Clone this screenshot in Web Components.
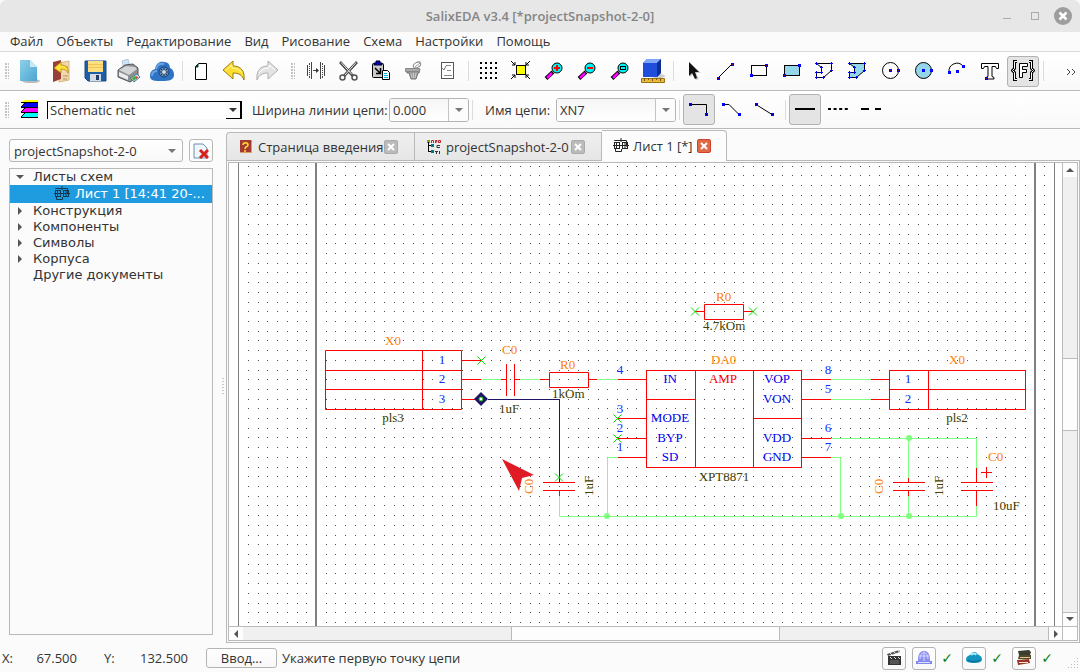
<!DOCTYPE html>
<html lang="ru">
<head>
<meta charset="utf-8">
<title>SalixEDA v3.4</title>
<style>
html, body { height: 100%; margin: 0; }
body { background: #fbfbfb; color: #333; font: 13px/16px "Open Sans", "Noto Sans", sans-serif; overflow: hidden; }
</style>
</head>
<body>
<eda-window></eda-window>
<script>
/* ---------- icons ---------- */
const node = (x, y) => `<rect x="${x - 1}" y="${y - 1}" width="3" height="3" fill="#00f"/><rect x="${x}" y="${y}" width="1" height="1" fill="#a00"/>`;
const pin = (x, y) => `<rect x="${x - 1}" y="${y - 1}" width="3" height="3" fill="#00f"/><rect x="${x}" y="${y}" width="1" height="1" fill="#006"/>`;
const K = 'stroke="#000" fill="none"';
const lens = inner => `<path d="M4 19.500L11 13" stroke="#000" stroke-width="4"/><path d="M5 19L10 14" stroke="#f0f" stroke-width="2.500"/><circle cx="15" cy="9" r="5" fill="#00f4f4" stroke="#000"/>${inner}`;
const sheet = c => `<g fill="none" stroke="${c}"><path d="M1.500 3v-.500h12v6"/><rect x="1.500" y="4.500" width="5" height="6"/><rect x="9.500" y="4.500" width="5" height="6"/><path d="M0 7.500h16M8 0v4M3.500 5v5M12 5v5M2.500 11v2.500h6v-2.500" /></g>`;
const ICONS = {
  newdoc: `<defs><linearGradient id="g" x2="1" y2="1"><stop stop-color="#8fd0ea"/><stop offset="1" stop-color="#4ba5cf"/></linearGradient></defs><ellipse cx="13" cy="22" rx="9" ry="2" fill="#bbb"/><path d="M2 1h10l7 7v14H2z" fill="url(#g)"/><path d="M12 1v7h7z" fill="#c9e9f5"/>`,
  open: `<path d="M8 4l10-2v19l-10 2z" fill="#f0d9ae" stroke="#d8b880"/><path d="M12 8h5M12 17h5M12 20h4" stroke="#b98b55"/><path d="M2 3l8-2v19l-8 3z" fill="#9a3f37"/><path d="M3 9l7-6v3c5 0 8 3 7 8-1-3-4-4-7-4v4z" fill="#ffe13a" stroke="#a9790e" stroke-width=".7"/>`,
  save: `<path d="M1 2h21v20H4l-3-3z" fill="#1f5fa8" stroke="#174a86"/><rect x="4" y="2" width="15" height="11" fill="#ffdf80"/><path d="M4 5.500h15M4 8.500h15" stroke="#f2c455"/><rect x="6" y="15" width="11" height="7" fill="#d6dbe2"/><rect x="12" y="16" width="3" height="5" fill="#1f3f68"/>`,
  print: `<path d="M5 2l6-2 2 8-6 3z" fill="#cfe4f7" stroke="#9bb6cf" stroke-width=".7"/><path d="M1 11l7-5 8-1 5 4v9l-8 5-12-5z" fill="#8d8f92" stroke="#55585c"/><path d="M2 11l7-4 9 1 2 2-8 6z" fill="#d2d4d6"/><path d="M2 13l9 4v4l-9-4z" fill="#ececec"/><path d="M13 19l7-4 3 3-6 5z" fill="#cfe6ff" stroke="#578"/><path d="M14 19l4-2 2 2-3 3z" fill="#4bb04b"/><path d="M18 18l2-1 1 2-2 1z" fill="#d6452d"/>`,
  cloud: `<path d="M0 17c0-4 2-6 5-7 1-6 5-8 9-7 5 0 6 4 6 6 3 1 4 4 4 7 0 5-5 6-12 6S0 22 0 17z" fill="#2f74c4"/><path d="M6 10c1-5 5-6 8-5M2 17c0-3 2-5 5-5" stroke="#6ea4e3" fill="none" stroke-width="2"/><circle cx="14" cy="13" r="5" fill="#6a8fb8" stroke="#153f78"/><path d="M14 9v8M10 13h8M11 10l6 6M17 10l-6 6" stroke="#17335c"/><circle cx="14" cy="13" r="2" fill="#cfd8e2"/>`,
  page: `<path d="M8.500 4.500h8v16h-11v-13z" fill="#fff" stroke="#000"/><path d="M8 5v3H6z" fill="#088" stroke="#033"/>`,
  undo: `<path d="M0 11l10-9v5c8 0 12 5 11 14-2-5-5-7-11-7v6z" fill="#ffdf2e" stroke="#9c7c10"/><path d="M3 11l6-5v3c5 0 8 2 10 5" fill="none" stroke="#fff6a8"/>`,
  redo: `<path d="M22 11L12 2v5C4 7 0 12 1 21c2-5 5-7 11-7v6z" fill="#e3e3e3" stroke="#b0b0b0"/><path d="M19 11l-6-5v3c-5 0-8 2-10 5" fill="none" stroke="#fff"/>`,
  mirror: `<g fill="none" stroke="#444"><path d="M7.500 3v17M3.500 6v11M5.500 4v2M5.500 17v2M16.500 3v17M20.500 6v11M18.500 4v2M18.500 17v2"/><path d="M5.500 7v9M18.500 7v9" stroke-dasharray="1 1"/><path d="M9 11.500h4"/></g><path d="M12 9l3 2.500-3 2.500z" fill="#333"/>`,
  cut: `<path d="M3 3l13 14M20 3L7 17" stroke="#444" stroke-width="2.600"/><path d="M4 3.500l11 12M19 3.500L8 16" stroke="#eee"/><circle cx="5.500" cy="18.500" r="2.500" fill="none" stroke="#555" stroke-width="1.500"/><circle cx="17.500" cy="18.500" r="2.500" fill="none" stroke="#555" stroke-width="1.500"/>`,
  paste: `<rect x="2.500" y="4.500" width="11" height="14" rx="1" fill="#ccc" stroke="#000"/><path d="M4 4h2V2h4v2h2v2H4z" fill="#00b" stroke="#002"/><path d="M5 9l5 5M10.500 9v5.500H6" stroke="#000" stroke-width="1.500" fill="none"/><path d="M12.500 11.500h5l2 2v7h-7z" fill="#fff" stroke="#000"/><path d="M14 14.500h3M14 16.500h4M14 18.500h4" stroke="#0bd"/>`,
  trash: `<path d="M3 10h14l-1 4h-1l-2 6H8l-2-6H4z" fill="#999" stroke="#777"/><path d="M2.500 9.500h14v3h-14z" fill="#aaa" stroke="#888"/><path d="M8 14l1 5M10.500 14v5M13 14l-1 5" stroke="#ccc"/><ellipse cx="14" cy="6" rx="4" ry="2.500" transform="rotate(-30 14 6)" fill="none" stroke="#888"/><path d="M12 8l5-4" stroke="#999"/>`,
  props: `<rect x="5.500" y="3.500" width="12" height="16" fill="#fff" stroke="#555"/><path d="M10 6.500h5M11 11.500h4M8 16.500h8" stroke="#888"/><path d="M6 9l2 2 2-4" stroke="#777" fill="none"/>`,
  grid: [3, 8, 13, 18].map(y => [4, 9, 14, 19].map(x => `<rect x="${x}" y="${y}" width="2" height="2"/>`).join('')).join(''),
  fit: `<rect x="7.500" y="6.500" width="9" height="9" fill="#ff0" stroke="#000"/><path d="M2 2l4 4M6 3v3H3M21 2l-4 4M17 3v3h3M2 20l4-4M6 19v-3H3M21 20l-4-4M17 19v-3h3" ${K}/>`,
  zin: lens('<path d="M12 9h6M15 6v6" stroke="#f00" stroke-width="2"/>'),
  zout: lens('<path d="M12 9h6" stroke="#f00" stroke-width="2"/>'),
  zfit: lens('<rect x="12.500" y="7.500" width="5" height="3" fill="none" stroke="#000"/>'),
  cube: `<ellipse cx="17" cy="17" rx="7" ry="2" fill="#ccc"/><path d="M2 4l4-4h14v14l-4 4H2z" fill="#2356c8"/><path d="M2 4h14v14H2z" fill="#1f4ddc"/><path d="M2 4l4-4h14l-4 4z" fill="#7fa9f6"/><path d="M16 4l4-4v14l-4 4z" fill="#0b2f93"/><path d="M.500 19.500h23v4h-23z" fill="#e8b93c" stroke="#9b7415"/><path d="M3.500 19v3M7.500 19v2M11.500 19v3M15.500 19v2M19.500 19v3" stroke="#7b5a0a"/>`,
  arrow: `<path d="M9 4v14l3-3 3 6 3-1-3-6h5z" fill="#999" opacity=".5"/><path d="M8 3v14l3-3 3 6 2-1-2-6h4z" fill="#111"/>`,
  line: `<path d="M4 19L18 5" ${K}/>${node(4, 19)}${node(18, 5)}`,
  rect: `<rect x="4.500" y="6.500" width="15" height="10" ${K}/>${node(4, 16)}${node(19, 6)}`,
  frect: `<rect x="4.500" y="6.500" width="15" height="10" fill="#95d7ea" stroke="#000"/>${node(4, 16)}${node(19, 6)}`,
  poly: `<path d="M3.500 4.500h15v7l-8 7h-7v-5h5v-5z" ${K}/><g fill="#00f">${[[3,4],[18,4],[18,11],[10,18],[3,18],[3,13],[8,13],[8,8]].map(p => `<path d="M${p[0]-1} ${p[1]}h3v1h-3zM${p[0]} ${p[1]-1}h1v3h-1z"/>`).join('')}</g>`,
  circ: `<circle cx="11.500" cy="11.500" r="8" ${K}/>${node(11, 11)}${node(19, 11)}`,
  fcirc: `<circle cx="11.500" cy="11.500" r="8" fill="#95d7ea" stroke="#000"/>${node(11, 11)}${node(19, 11)}`,
  arc: `<path d="M4 13a8 8 0 0 1 14-6" ${K}/>${node(4, 13)}${node(12, 12)}${node(18, 7)}`,
  text: `<path d="M3.500 4.500h17v5h-2l-1-2h-3.500v10l2 1v1.500h-8v-1.500l2-1v-10H6.500l-1 2h-2z" fill="#fff" stroke="#000"/>${node(8, 19)}`,
  field: `<path d="M6 2.500h-2.500v7l-2 2 2 2v7H6M18 2.500h2.500v7l2 2-2 2v7H18" fill="none" stroke="#000" stroke-width="3"/><path d="M6 2.500h-2.500v7l-2 2 2 2v7H6M18 2.500h2.500v7l2 2-2 2v7H18" fill="none" stroke="#fff"/><path d="M8.500 4.500h8v3h-5v3h4v3h-4v5h-3z" fill="#fff" stroke="#000"/>`,
  layers: `<path d="M6 2h14v2H4z" fill="#ff0"/><path d="M6 5h14v4H3z" fill="#00f"/><path d="M6 10h14v4H3z" fill="#f0f"/><path d="M6 15h14v4H3z" fill="#0ff"/><path d="M3 4.500h17M3 9.500h17M3 14.500h17M3 19.500h17M7 5l-4 4M7 10l-4 4M7 15l-4 4" stroke="#000" fill="none"/>`,
  ortho: `<path d="M3 6.500h16.500V16" ${K}/>${pin(3, 6)}${pin(19, 16)}`,
  bevel: `<path d="M3 6.500h6l10 10" ${K}/>${pin(3, 6)}${pin(19, 16)}`,
  direct: `<path d="M3 6.500l16 10" ${K}/>${pin(3, 6)}${pin(19, 16)}`,
  solid: `<path d="M2 11h20" stroke="#000" stroke-width="2"/>`,
  dots: `<path d="M2 11h20" stroke="#000" stroke-width="2" stroke-dasharray="3 2.600"/>`,
  dash: `<path d="M2 11h8M16 11h6" stroke="#000" stroke-width="2"/>`,
  closesheet: `<path d="M1 1h9l4 4v10H1z" fill="#eef5fb" stroke="#7090b0"/><path d="M7 7l8 8M15 7l-8 8" stroke="#d5201e" stroke-width="3"/>`,
  help: `<path d="M2 1h11l1 2v11H3l-1-1z" fill="#a33a32"/><path d="M13 3h1v11H3v-1h10z" fill="#d9a35f"/><path d="M5 6c0-3 5-3 5 0 0 2-3 1-3 4M7 11v2" stroke="#fd3" stroke-width="1.500" fill="none"/>`,
  tree: `<path d="M1 1h3v3H1z" fill="#990"/><path d="M5.500 4V1.500h2V4M9.500 4V1.500h1.500v1.500H9M12.500 1.500h2v2h-2z" stroke="#b22" fill="none"/><path d="M2.500 3v10M2 6.500h4M2 12.500h4" ${K}/><rect x="5" y="5" width="3" height="3" fill="#077"/><rect x="5" y="11" width="3" height="3" fill="#077"/><path d="M14 6.500h-3v2h3M9 12.500h3M10.500 12v3M13.500 12v3" stroke="#333" fill="none"/>`,
  sheet: sheet('#222'), sheetsel: sheet('#123a55'),
  clap: `<path d="M3 7h13v9H3z" fill="#333"/><path d="M2 5l12-4 1 2-12 4z" fill="#555"/><path d="M5 4l2 2M9 3l2 2M13 1l1 2M5 8l2 2M9 8l2 2M13 8l2 2" stroke="#ddd"/><path d="M5 12h9M5 14h9" stroke="#777"/>`,
  dome: `<path d="M3 10c0-11 12-11 12 0v2H3z" fill="#8b8ff0"/><path d="M5 10c0-4 2-6 4-7M13 10c0-4-2-6-4-7M9 3v9M4 7h10" stroke="#d5d8ff" fill="none"/><path d="M1 12h16v3H1z" fill="#8086ea"/><path d="M3 13.500h12" stroke="#dfe1ff"/>`,
  blue: `<path d="M1 11c0-4 3-4 5-6 2-3 6-2 6 0 3 1 5 3 5 5 0 3-3 4-8 4s-8-1-8-3z" fill="#1295c0"/><path d="M6 6c2-2 4-2 5 0" stroke="#aaf2ff" stroke-width="2" fill="none"/><path d="M3 11c3 2 9 2 12 0" stroke="#0a5f86" fill="none"/>`,
  books: `<path d="M3 2l11-1 2 2-1 3H4z" fill="#3a3c30"/><path d="M4 6h12v4H3z" fill="#55492c"/><path d="M5 8.500h10" stroke="#dcc88d"/><path d="M2 11l12-1 1 4-12 2z" fill="#9a3427"/><path d="M4 13.500h9" stroke="#eed"/>`
};
const sized = { closesheet: 16, help: 16, tree: 16, sheet: 16, sheetsel: 16, clap: 18, dome: 18, blue: 18, books: 18 };

function define(name, html, setup) {
  const template = document.createElement('template');
  template.innerHTML = html;
  customElements.define(name, class extends HTMLElement {
    constructor() {
      super();
      this.attachShadow({ mode: 'open' }).append(template.content.cloneNode(true));
    }
    connectedCallback() { if (setup) setup(this, this.shadowRoot); }
  });
}

define('eda-icon', `<style>:host{display:block;flex:none}svg{display:block}</style><svg aria-hidden="true"></svg>`, (el, root) => {
  const n = el.getAttribute('name'), s = sized[n] || 24;
  if (!n) return;
  const svg = root.querySelector('svg');
  svg.setAttribute('width', s); svg.setAttribute('height', s); svg.setAttribute('viewBox', `0 0 ${s} ${s}`);
  svg.innerHTML = n === 'fpoly' ? ICONS.poly.replace('fill="none"', 'fill="#95d7ea"') : ICONS[n];
});

define('tool-button', `<style>
:host{display:block;flex:none;width:33px}
button{box-sizing:border-box;width:32px;height:31px;padding:0;border:1px solid transparent;border-radius:3px;background:none;display:flex;align-items:center;justify-content:center}
:host([pressed]) button{background:#e4e4e4;border-color:#b2b2b2}
</style><button type="button"></button>`, (el, root) => {
  const b = root.querySelector('button');
  b.setAttribute('aria-label', el.getAttribute('label'));
  b.innerHTML = `<eda-icon name="${el.getAttribute('icon')}"></eda-icon>`;
});

define('tool-sep', `<style>:host{display:block;flex:none;width:1px;height:20px;margin:0 3px;background:#dcdcdc}</style>`);
define('tool-grip', `<style>:host{display:block;flex:none;width:4px;height:16px;margin:0 5px;background:radial-gradient(circle at 1px 1px,#c4c4c4 1px,transparent 1px) 0 0/3px 3px}:host(:not(:first-child)){margin-left:6px}</style>`);

define('title-bar', `<style>
:host{display:grid;grid-template-columns:1fr auto 1fr;align-items:center;height:32px;background:#e7e7e7;border-radius:6px 6px 0 0;color:#858585}
h1{grid-column:2;margin:0;font:600 13px/16px "Open Sans","Noto Sans",sans-serif}
div{display:flex;justify-content:flex-end;gap:10px;padding-right:8px}
button{width:18px;height:18px;padding:0;border:0;background:none;display:block}
svg{display:block}
</style><h1><slot></slot></h1><div>
<button aria-label="Свернуть"><svg width="18" height="18"><path d="M5 11.500h8" stroke="#aaa"/></svg></button>
<button aria-label="Развернуть"><svg width="18" height="18"><rect x="5.500" y="5.500" width="7" height="7" fill="none" stroke="#aaa"/></svg></button>
<button aria-label="Закрыть"><svg width="18" height="18"><circle cx="9" cy="9" r="9" fill="#9d9d9d"/><path d="M5.500 5.500l7 7M12.500 5.500l-7 7" stroke="#fff" stroke-width="2.500"/></svg></button></div>`);

define('menu-bar', `<style>
:host{display:flex;gap:13px;height:19px;padding:0 10px;border-bottom:1px solid #dadada;background:#fbfbfb}
::slotted(button){flex:none;height:18px;padding:0;border:0;background:none;font:inherit;color:inherit}
</style><slot></slot>`);

define('tool-bar', `<style>
:host{display:flex;align-items:center;height:38px;border-bottom:1px solid #b9b9b9;background:linear-gradient(#fff,#f9f9f9)}
:host([slim]){height:37px}
</style><slot></slot>`);

define('edit-combo', `<style>
:host{display:flex;align-items:center;flex:none}
label{white-space:nowrap}
div{box-sizing:border-box;display:flex;height:24px;border:1px solid #b4b4b4;border-radius:3px;background:#fff;overflow:hidden}
input{flex:1;min-width:0;border:0;padding:0 3px;background:linear-gradient(#f6f6f6,#fff);font:inherit;color:inherit;outline:0}
button{width:20px;padding:0;border:0;border-left:1px solid #c4c4c4;background:#fcfcfc;display:grid;place-items:center}
</style><label for="f"></label><div><input id="f"><button type="button" aria-label="Список"><svg width="8" height="4"><path d="M0 0h8L4 4z" fill="#777"/></svg></button></div>`, (el, root) => {
  root.querySelector('label').textContent = el.getAttribute('label');
  root.querySelector('label').style.width = el.getAttribute('labelwidth') + 'px';
  root.querySelector('div').style.width = el.getAttribute('width') + 'px';
  root.querySelector('input').value = el.getAttribute('value');
});

define('layer-select', `<style>
:host{display:block;flex:none;width:195px;margin:0 10px 0 5px}
div{position:relative}
select{box-sizing:border-box;display:block;width:100%;height:18px;appearance:none;border:0;border-top:1px solid #000;border-left:1px solid #000;border-right:1px solid #000;border-radius:0;background:#fff;padding:0 0 0 2px;font:inherit;color:inherit}
span{position:absolute;right:0;top:1px;box-sizing:border-box;width:16px;height:17px;border-right:2px solid #000;border-bottom:1px solid #000;display:grid;place-items:center;background:#fcfcfc;pointer-events:none}
</style><div><select aria-label="Слой"><option>Schematic net</option></select><span><svg width="8" height="4"><path d="M0 0h8L4 4z" fill="#333"/></svg></span></div>`);

define('side-panel', `<style>
:host{display:flex;flex-direction:column;gap:6px;flex:none;box-sizing:border-box;width:213px;padding:10px 0 9px 9px}
.top{display:flex;gap:6px}
.sel{position:relative;flex:1}
select{box-sizing:border-box;width:100%;height:23px;display:block;appearance:none;border:1px solid #b8b8b8;border-radius:3px;background:linear-gradient(#fff,#f8f8f8);padding:0 4px;font:inherit;color:inherit}
.sel svg{position:absolute;right:7px;top:10px;pointer-events:none}
button{box-sizing:border-box;width:24px;height:23px;padding:0;border:1px solid #b8b8b8;border-radius:3px;background:#fdfdfd;display:grid;place-items:center}
</style><div class="top"><div class="sel"><select aria-label="Проект"><option>projectSnapshot-2-0</option></select><svg width="8" height="4"><path d="M0 0h8L4 4z" fill="#777"/></svg></div><button aria-label="Закрыть проект"><eda-icon name="closesheet"></eda-icon></button></div><slot></slot>`);

define('doc-tree', `<style>
:host{display:block;flex:1;border:1px solid #b9b9b9;font:13px/16px "DejaVu Sans",sans-serif}
ul{margin:0;padding:0;list-style:none}
li{display:flex;align-items:center;height:16px}
li svg{flex:none;width:23px}
.on{height:18px;background:#1e9cdf;color:#fff}
.on eda-icon{margin:0 5px 0 44px}
.on span{overflow:hidden;white-space:nowrap}
</style><ul role="tree">
<li role="treeitem"><svg height="8"><path d="M6 2h8l-4 4z" fill="#555"/></svg>Листы схем</li>
<li role="treeitem" class="on"><eda-icon name="sheetsel"></eda-icon><span>Лист 1 [14:41 20-...</span></li>
<li role="treeitem"><svg height="8"><path d="M8 0v8l4-4z" fill="#555"/></svg>Конструкция</li>
<li role="treeitem"><svg height="8"><path d="M8 0v8l4-4z" fill="#555"/></svg>Компоненты</li>
<li role="treeitem"><svg height="8"><path d="M8 0v8l4-4z" fill="#555"/></svg>Символы</li>
<li role="treeitem"><svg height="8"><path d="M8 0v8l4-4z" fill="#555"/></svg>Корпуса</li>
<li role="treeitem"><svg height="8"></svg>Другие документы</li></ul>`);

define('doc-tab', `<style>
:host{display:flex;align-items:center;flex:none;box-sizing:border-box;height:28px;padding:1px 16px 0 11px;border:1px solid #b9b9b9;border-bottom:0;border-left-width:0;background:linear-gradient(#efefef,#e6e6e6)}
:host(:first-child){border-left-width:1px;border-radius:4px 0 0 0}
:host([active]){height:31px;margin-bottom:-1px;padding:0 15px 1px 11px;background:#fcfcfc;border-left:0;border-radius:0 4px 0 0;z-index:1}
slot{display:block;flex:1;white-space:nowrap;padding-left:4px}
button{flex:none;width:14px;height:14px;padding:0;border:1px solid #aaa;border-radius:2px;background:#bbb;display:grid;place-items:center}
:host([active]) button{background:#e06a48;border-color:#cf4030}
</style><eda-icon></eda-icon><slot></slot><button aria-label="Закрыть вкладку"><svg width="8" height="8"><path d="M1 1l6 6M7 1l-6 6" stroke="#fff" stroke-width="2"/></svg></button>`, (el, root) => {
  const i = document.createElement('eda-icon');
  i.setAttribute('name', el.getAttribute('icon'));
  root.querySelector('eda-icon').replaceWith(i);
  el.style.width = el.getAttribute('width') + 'px';
});

define('scroll-bar', `<style>
:host{display:flex;background:#f0f0f0}
:host([vertical]){flex-direction:column;width:14px;border-left:1px solid #bbb}
:host(:not([vertical])){height:13px;border-top:1px solid #bbb}
button{flex:none;width:14px;height:14px;padding:0;border:0 solid #bbb;background:#fdfdfd;display:grid;place-items:center}
:host(:not([vertical])) button{height:13px}
i{flex:269;background:#f0f0f0}
b{flex:269;background:#fdfdfd;border:0 solid #bbb}
:host([vertical]) i{flex:181}:host([vertical]) b{flex:72;border-width:1px 0}
:host(:not([vertical])) b{border-width:0 1px}
:host([vertical]) button:first-child{border-bottom-width:1px}:host([vertical]) button:last-child{border-top-width:1px}
:host(:not([vertical])) button:first-child{border-right-width:1px}:host(:not([vertical])) button:last-child{border-left-width:1px}
</style><button aria-label="Назад"><svg width="8" height="8"><path/></svg></button><i></i><b></b><i></i><button aria-label="Вперёд"><svg width="8" height="8"><path/></svg></button>`, (el, root) => {
  const d = el.hasAttribute('vertical') ? ['M0 6h8L4 2z', 'M0 2h8L4 6z'] : ['M6 0v8L2 4z', 'M2 0v8l4-4z'];
  root.querySelectorAll('path').forEach((p, i) => { p.setAttribute('d', d[i]); p.setAttribute('fill', '#555'); });
});

/* ---------- schematic sheet ---------- */
const R = '#f00', G = '#80ff80', O = '#ff8000', B = '#0000f0', N = '#1030ff', D = '#404000';
const path = (d, c, w = 1) => `<path d="${d}" stroke="${c}" stroke-width="${w}" fill="none"/>`;
const txt = (s, x, y, c) => `<text x="${x}" y="${y}" fill="${c}">${s}</text>`;
const mid = (s, x, y, c) => `<text x="${x}" y="${y}" fill="${c}" text-anchor="middle">${s}</text>`;
const up = (s, x, y, c) => `<text transform="translate(${x} ${y}) rotate(-90)" fill="${c}">${s}</text>`;
const cross = (x, y, c = '#00e000') => `<path d="M${x - 4} ${y - 4}l8 8M${x + 4} ${y - 4}l-8 8" stroke="${c}" fill="none"/>`;
const dot = (x, y) => `<circle cx="${x}" cy="${y}" r="3" fill="${G}"/>`;

define('schematic-view', `<style>
:host{display:block;min-width:0;min-height:0;overflow:hidden;background:#fff}
svg{display:block;width:100%;height:100%}
text{font:13px "Liberation Serif",serif}
</style><svg role="img" aria-label="Схема"></svg>`, (el, root) => {
  const step = 9.71;
  let dots = '';
  for (let j = 0; j < 48; j++) for (let i = 0; i < 83; i++)
    dots += `M${Math.round(248 + i * step)} ${Math.round(165.6 + j * step)}h1v1h-1z`;
  root.querySelector('svg').innerHTML = `<g transform="translate(-229 -163)">
  <path d="${dots}" fill="#505050" shape-rendering="crispEdges"/>
  ${path('M238.5 163V700M1054.5 163V700', '#808080')}${path('M316 163V700M1035 163V700', '#808080', 2)}
  ${path('M481 379.5h20M520 379.5h20M597 379.5h21M618 457.5h-10.5v59M559.5 495v21.5h417V505M831 457.5h9.5v59M831 379.5h40M831 399.5h40M831 438.5h145.500v30M908.5 438.5v40M908.5 495v21', G)}
  ${path('M325.5 350.500h136v59h-136zM422.500 350v59M325 370.500h136M325 389.500h136M461 360.500h20M461 379.500h20M461 399.500h20M501 379.500h5M506.500 364v32M514.500 364v32M515 379.500h5M540 379.500h9M549.500 372.500h39v15h-39zM589 379.500h8M618 379.500h28', R)}
  ${path('M646.500 370.500h155v97h-155zM695.500 370v97M753.500 370v97M646 399.500h49M753 418.500h48M618 418.500h28M618 438.500h28M618 457.500h28M801 379.500h30M801 399.500h30M801 438.500h30M801 457.500h30', R)}
  ${path('M704.500 304.500h39v15h-39zM695 311.500h9M744 311.500h9M871 379.500h18M871 399.500h18M889.500 370.500h136v39h-136zM928.500 370v39M889 389.500h136', R)}
  ${path('M559.500 478v4M543 482.500h32M543 490.500h32M559.500 491v5M908.500 478v4M893 482.500h32M893 490.500h32M908.500 491v5M976.500 468v14M961 482.500h32M961 490.500h32M976.500 491v15M986.500 467v11M981 472.500h11', R)}
  ${path('M488 399.500h71.500V482', '#1e1664')}
  <path d="M481 392l7 7-7 7-7-7z" fill="#1e1664"/><circle cx="481" cy="399" r="2" fill="#fff" stroke="#00c000"/>
  ${cross(481.5, 360.5)}${cross(559, 477.5)}${cross(695, 311.5)}${cross(753, 311.5)}${cross(617.5, 418.5)}${cross(617.5, 438.5)}
  ${dot(607, 516)}${dot(841, 516)}${dot(909, 516)}${dot(909, 438)}
  ${mid('X0', 393, 345, O)}${mid('1', 442, 364, N)}${mid('2', 442, 383, N)}${mid('3', 442, 403, N)}${mid('pls3', 393, 422, D)}
  ${txt('C0', 502, 354, O)}${txt('1uF', 499, 413, D)}${txt('R0', 560, 369, O)}${txt('1kOm', 552, 398, D)}
  ${up('C0', 533, 494, O)}${up('1uF', 593, 496, D)}${up('C0', 883, 494, O)}${up('1uF', 943, 496, D)}
  ${txt('R0', 716, 301, O)}${txt('4.7kOm', 703, 330, D)}${txt('DA0', 711, 364, O)}${mid('AMP', 723, 383, R)}
  ${mid('IN', 670, 383, B)}${mid('MODE', 670, 422, B)}${mid('BYP', 670, 442, B)}${mid('SD', 670, 461, B)}
  ${mid('VOP', 777, 383, B)}${mid('VON', 777, 403, B)}${mid('VDD', 777, 442, B)}${mid('GND', 777, 461, B)}
  ${mid('XPT8871', 724, 481, D)}
  ${mid('4', 620, 374, N)}${mid('3', 620, 413, N)}${mid('2', 620, 432, N)}${mid('1', 620, 451, N)}
  ${mid('8', 828, 374, N)}${mid('5', 828, 393, N)}${mid('6', 828, 432, N)}${mid('7', 828, 451, N)}
  ${mid('X0', 957, 364, O)}${mid('1', 908, 383, N)}${mid('2', 908, 403, N)}${mid('pls2', 957, 422, D)}
  ${txt('C0', 988, 461, O)}${txt('10uF', 993, 510, D)}
  <path d="M502 459l32 16-12 3-3 13z" fill="#e01b24"/></g>`;
});

define('doc-area', `<style>
:host{display:flex;flex-direction:column;flex:1;min-width:0;margin-left:3px;padding:1px 0 1px}
.tabs{display:flex;align-items:flex-end}
.pane{flex:1;min-height:0;box-sizing:border-box;display:flex;border:1px solid #b9b9b9;padding:1px}
.view{flex:1;min-width:0;display:grid;grid-template:1fr 14px/1fr 15px;border:1px solid #b9b9b9;background:#fbfbfb}
.corner{border-left:1px solid #bbb;border-top:1px solid #bbb;background:#fff}
</style><div class="tabs"><slot name="tab"></slot></div><div class="pane"><div class="view"><schematic-view></schematic-view><scroll-bar vertical></scroll-bar><scroll-bar></scroll-bar><div class="corner"></div></div></div>`);

define('split-grip', `<style>:host{display:flex;align-items:center;justify-content:flex-end;flex:none;width:11px;margin-right:-1px}i{width:2px;height:18px;background:repeating-linear-gradient(#c8c8c8 0 1px,transparent 1px 3px)}</style><i></i>`);

define('status-bar', `<style>
:host{display:flex;align-items:center;height:28px;white-space:nowrap}
output{display:flex;justify-content:space-between}
.x{width:75px;margin-right:27px;padding-left:2px}.y{width:84px;margin-right:18px}
button{box-sizing:border-box;padding:0;border:1px solid #b4b4b4;border-radius:3px;background:linear-gradient(#fff,#f8f8f8);font:inherit;color:inherit;display:grid;place-items:center}
.in{width:71px;height:20px;margin-right:5px}
.st{width:24px;height:23px}
.right{margin-left:auto;display:flex;align-items:center}
.gap{margin-right:6px}
.ok{width:22px;margin-right:4px;text-align:center;color:#108010;font:14px/16px "DejaVu Sans",sans-serif}
.grip{display:block;margin:12px 0 0 6px}
</style><output class="x"><span>X:</span><span>67.500</span></output><output class="y"><span>Y:</span><span>132.500</span></output>
<button class="in">Ввод...</button><span>Укажите первую точку цепи</span>
<div class="right"><button class="st gap" aria-label="Запись"><eda-icon name="clap"></eda-icon></button>
<button class="st" aria-label="Сервер"><eda-icon name="dome"></eda-icon></button><span class="ok">✓</span>
<button class="st" aria-label="Облако"><eda-icon name="blue"></eda-icon></button><span class="ok">✓</span>
<button class="st" aria-label="Библиотека"><eda-icon name="books"></eda-icon></button><span class="ok">✓</span>
<svg class="grip" width="12" height="12" fill="#bbb"><path d="M9 0h1v1h-1zM6 3h1v1h-1zM9 3h1v1h-1zM3 6h1v1h-1zM6 6h1v1h-1zM9 6h1v1h-1zM0 9h1v1h-1zM3 9h1v1h-1zM6 9h1v1h-1zM9 9h1v1h-1z"/></svg></div>`);

const tb = list => list.split(' ').map(n => n === '|' ? '<tool-sep></tool-sep>' : n === ':' ? '<tool-grip></tool-grip>' :
  n.startsWith('+') ? `<tool-button pressed icon="${n.slice(1)}" label="${n.slice(1)}"></tool-button>` : `<tool-button icon="${n}" label="${n}"></tool-button>`).join('');

define('eda-window', `<style>
:host{display:flex;flex-direction:column;height:100vh}
main{flex:1;min-height:0;display:flex}
.more{margin:0 4px 0 auto;padding:0;border:0;background:none;font:inherit;color:#444}
.layers{width:28px}
.net{margin-left:9px}
</style>
<title-bar>SalixEDA v3.4 [*projectSnapshot-2-0]</title-bar>
<menu-bar><button>Файл</button><button>Объекты</button><button>Редактирование</button><button>Вид</button><button>Рисование</button><button>Схема</button><button>Настройки</button><button>Помощь</button></menu-bar>
<tool-bar>${tb(': newdoc open save print cloud | page undo redo : mirror cut paste trash props | grid fit zin zout zfit cube | arrow line rect frect poly fpoly circ fcirc arc text +field |')}<button class="more" aria-label="Ещё"><svg width="10" height="8"><path d="M1 1l3 3-3 3M6 1l3 3-3 3" fill="none" stroke="#444"/></svg></button></tool-bar>
<tool-bar slim><tool-grip></tool-grip><tool-button class="layers" icon="layers" label="Слои"></tool-button><layer-select></layer-select>
<edit-combo label="Ширина линии цепи:" labelwidth="137" width="80" value="0.000"></edit-combo><tool-sep></tool-sep>
<edit-combo class="net" label="Имя цепи:" labelwidth="71" width="120" value="XN7"></edit-combo><tool-sep></tool-sep>${tb('+ortho bevel direct | +solid dots dash')}</tool-bar>
<main><side-panel><doc-tree></doc-tree></side-panel><split-grip></split-grip>
<doc-area><doc-tab slot="tab" icon="help" width="189">Страница введения</doc-tab><doc-tab slot="tab" icon="tree" width="187">projectSnapshot-2-0</doc-tab><doc-tab slot="tab" icon="sheet" width="125" active>Лист 1 [*]</doc-tab></doc-area></main>
<status-bar></status-bar>`);
</script>
</body>
</html>
